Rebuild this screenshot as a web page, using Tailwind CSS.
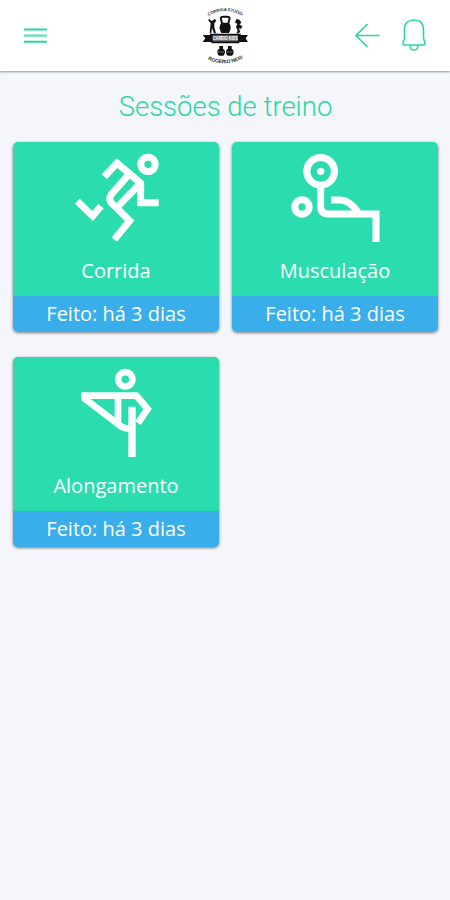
<!DOCTYPE html>
<html lang="pt-BR">
<head>
    <meta charset="UTF-8">
    <meta name="viewport" content="width=device-width, initial-scale=1.0">
    <title>Sessões de treino</title>
    <script src="https://cdn.jsdelivr.net/npm/@tailwindcss/browser@4"></script>
</head>
<body class="bg-[#f4f6fb] min-h-screen font-['Open_Sans',sans-serif]">
    <header class="h-[71px] bg-white px-6 grid grid-cols-3 items-center shadow-[0_1px_2px_rgba(0,0,0,0.4)]">
        <button class="w-6 h-6" aria-label="Menu">
            <svg class="w-6 h-6" viewBox="0 0 24 24" stroke="#2bd4a4" stroke-width="1.9">
                <path d="M0 5.500h23M0 17.700h23"/>
                <path d="M0 11.600h23" stroke="#70dfbd" stroke-width="2.500"/>
            </svg>
        </button>

        <svg class="w-[70px] h-[70px] justify-self-center" viewBox="0 0 210 210" fill="#111">
            <defs>
                <path id="arco-topo" d="M54 46Q105 14 158 46"/>
                <path id="arco-base" d="M50 174Q105 201 162 171"/>
            </defs>
            <text font-family="Liberation Sans" font-size="13" font-weight="bold" text-anchor="middle" fill="#444"><textPath href="#arco-topo" startOffset="50%" textLength="106">CORRIDA STUDIO</textPath></text>
            <text font-family="Liberation Sans" font-size="15" font-weight="bold" text-anchor="middle" fill="#333"><textPath href="#arco-base" startOffset="50%" textLength="110">ROGERIO NERI</textPath></text>
            <!-- kettlebell -->
            <path d="M96 66L92 52Q93 47 99 47H112Q118 47 119 52L115 66" fill="none" stroke="#111" stroke-width="6"/>
            <path d="M94 65H117Q127 78 117 96H94Q84 78 94 65Z"/>
            <!-- atletas -->
            <path d="M57 53l8 7 10-6 4 5-6 8v12l5 18h-6l-6-16-2 16h-5l3-30-7-9z"/>
            <path d="M140 53l10 5 4 8-6 4 9 6-4 8-8-2 6 8-4 7h-8l4-8-5-12 4-8-7-5z"/>
            <!-- faixa -->
            <path d="M38 102H60V98H152V102H174L167 112L174 123H148V127H64V123H38L46 112Z"/>
            <path d="M68 103H144V121H68Z" fill="#777"/>
            <text x="106" y="118" font-family="Liberation Sans" font-size="16" font-weight="bold" fill="#fff" text-anchor="middle" textLength="74" lengthAdjust="spacingAndGlyphs">CARDIO KIDS</text>
            <!-- pesos -->
            <path d="M88 135h11v8q6 2 6 10t-5 11H87q-5-2-5-11t6-10zM114 135h11v8q6 2 6 10t-5 11h-13q-5-2-5-11t6-10z"/>
            <path d="M84 153h18M110 153h18" stroke="#999" stroke-width="2"/>
        </svg>

        <div class="flex items-center justify-end gap-[19px] -mr-[2px]">
            <svg class="w-7 h-8" viewBox="0 0 28 32" fill="none" stroke="#2bd6a6" stroke-width="1.600">
                <path d="M26.500 15.500H3M14.500 4L3 15.500l11.500 11.500"/>
            </svg>
            <svg class="w-7 h-9 -mt-px" viewBox="0 0 28 36" fill="none" stroke="#2bd6a6" stroke-width="1.600" stroke-linejoin="round">
                <path d="M4.500 12.500C4.500 6 8.500 3 14 3s9.500 3 9.500 9.500V21q0 2 1.500 4v1.500q0 1.500-2 1.500H5q-2 0-2-1.500V25q1.500-2 1.500-4z"/>
                <path d="M10 28v1.500q.5 3.500 3.900 3.500t3.900-3.500V28"/>
            </svg>
        </div>
    </header>

    <main class="pl-[13px] pt-4 pr-3">
        <h1 class="h-10 leading-10 text-center font-['Roboto',sans-serif] font-light text-[27.5px] text-[#2bd6a6]">Sessões de treino</h1>

        <div class="mt-[15px] grid grid-cols-2 gap-x-[13px] gap-y-[25px]">
            <div class="h-[190px] flex flex-col rounded-[5px] overflow-hidden text-center text-white text-[20px] shadow-[0_1px_3px_rgba(0,0,0,0.5)]">
                <div class="h-[154px] pt-[10px] bg-[#2bdcaf]">
                    <svg class="w-[90px] h-[90px] mx-auto" viewBox="33 36 270 270" fill="none" stroke="#fff" stroke-width="21">
                        <circle cx="264" cy="73" r="21.500"/>
                        <path d="M133 110L171 69L245 132"/>
                        <path d="M206 104L154 163Q143 180 158 192L209 242L163 299"/>
                        <path d="M242 125V188H296"/>
                        <path d="M240 131L171 202"/>
                        <path d="M52 184L98 228L123 199"/>
                    </svg>
                    <p class="mt-[14px] leading-[30px]">Corrida</p>
                </div>
                <div class="h-9 leading-[35px] bg-[#3aaeea]">Feito: há 3 dias</div>
            </div>

            <div class="h-[190px] flex flex-col rounded-[5px] overflow-hidden text-center text-white text-[20px] shadow-[0_1px_3px_rgba(0,0,0,0.5)]">
                <div class="h-[154px] pt-[10px] bg-[#2bdcaf]">
                    <svg class="w-[90px] h-[90px] mx-auto" viewBox="30 36 270 270" fill="none" stroke="#fff" stroke-width="21">
                        <circle cx="122" cy="94" r="41.500"/>
                        <circle cx="122" cy="94" r="11" fill="#fff" stroke="none"/>
                        <circle cx="66" cy="201" r="21.500"/>
                        <path d="M122 138V199Q122 222 145 222H288V306"/>
                        <path d="M153 180H181Q211 181 234 218"/>
                    </svg>
                    <p class="mt-[14px] leading-[30px]">Musculação</p>
                </div>
                <div class="h-9 leading-[35px] bg-[#3aaeea]">Feito: há 3 dias</div>
            </div>

            <div class="h-[190px] flex flex-col rounded-[5px] overflow-hidden text-center text-white text-[20px] shadow-[0_1px_3px_rgba(0,0,0,0.5)]">
                <div class="h-[154px] pt-[10px] bg-[#2bdcaf]">
                    <svg class="w-[90px] h-[90px] mx-auto" viewBox="33 36 270 270" fill="none" stroke="#fff" stroke-width="20">
                        <circle cx="196" cy="73" r="21.500"/>
                        <path d="M216 220H202Q190 220 180 212L74 131V122H229L263 162L234 204"/>
                        <path d="M174 122V204"/>
                        <path d="M216 155V306" stroke-width="22"/>
                    </svg>
                    <p class="mt-[14px] leading-[30px]">Alongamento</p>
                </div>
                <div class="h-9 leading-[35px] bg-[#3aaeea]">Feito: há 3 dias</div>
            </div>
        </div>
    </main>
</body>
</html>
